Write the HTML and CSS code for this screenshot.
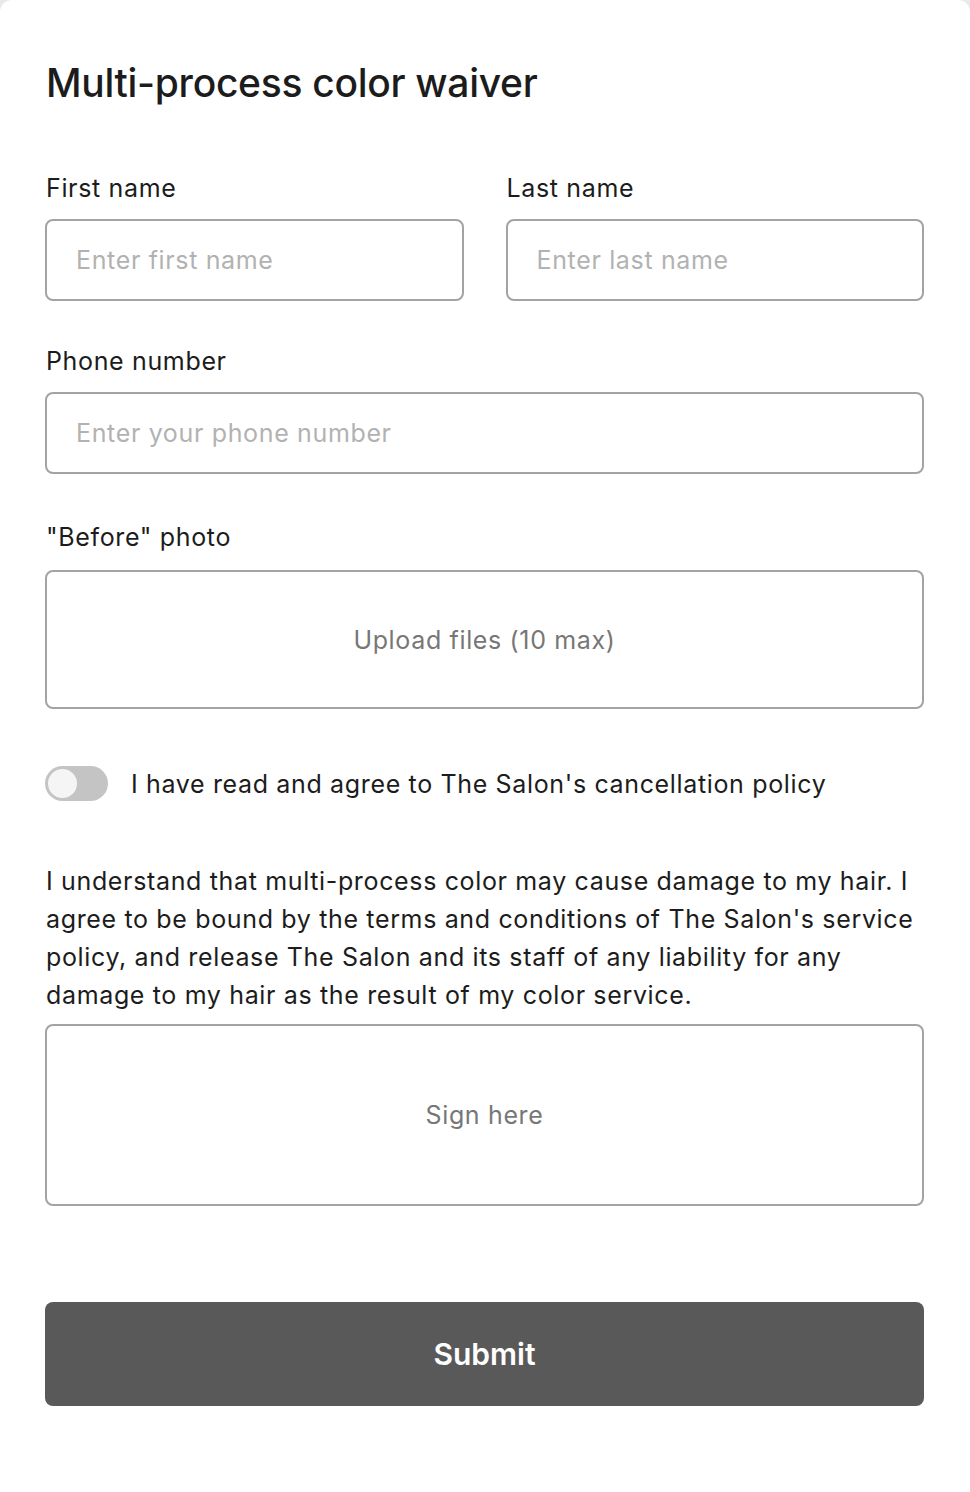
FILE: index.html
```html
<!DOCTYPE html>
<html lang="en">
<head>
<meta charset="utf-8">
<title>Multi-process color waiver</title>
<link rel="stylesheet" href="styles.css">
</head>
<body>
<main class="card">
  <h1 class="title">Multi-process color waiver</h1>
  <div class="row">
    <div class="field">
      <span class="label">First name</span>
      <span class="input"><span class="placeholder">Enter first name</span></span>
    </div>
    <div class="field">
      <span class="label">Last name</span>
      <span class="input"><span class="placeholder">Enter last name</span></span>
    </div>
  </div>
  <div class="field field-phone">
    <span class="label">Phone number</span>
    <span class="input"><span class="placeholder">Enter your phone number</span></span>
  </div>
  <div class="field field-photo">
    <span class="label">"Before" photo</span>
    <div class="upload">Upload files (10 max)</div>
  </div>
  <div class="agree">
    <span class="toggle"><span class="knob"></span></span>
    <span class="agree-text">I have read and agree to The Salon's cancellation policy</span>
  </div>
  <p class="terms">I understand that multi-process color may cause damage to my hair. I agree to be bound by the terms and conditions of The Salon's service policy, and release The Salon and its staff of any liability for any damage to my hair as the result of my color service.</p>
  <div class="sign">Sign here</div>
  <button class="submit" type="button">Submit</button>
</main>
</body>
</html>
```
FILE: styles.css
```css
html, body {
  margin: 0;
  padding: 0;
  background: #e9e9e9;
}
body {
  font-family: Inter, "Noto Sans", sans-serif;
  color: #1c1c1c;
}
.card {
  background: #fff;
  border-radius: 12px 12px 0 0;
  min-height: 1492px;
  box-sizing: border-box;
  padding: 57px 46px 0 45px;
  display: flex;
  flex-direction: column;
}
.title {
  margin: 0 0 0 1px;
  font-size: 39px;
  font-weight: 500;
  line-height: 52px;
  letter-spacing: -0.3px;
}
.row {
  display: grid;
  grid-template-columns: 1fr 1fr;
  gap: 42px;
  margin-top: 63px;
}
.field {
  display: flex;
  flex-direction: column;
}
.label {
  font-size: 25px;
  letter-spacing: 0.65px;
  line-height: 32px;
  height: 32px;
  margin-bottom: 15px;
  padding-left: 1px;
}
.field-phone { margin-top: 44px; }
.field-photo { margin-top: 47px; }
.field-photo .label { margin-bottom: 17px; }
.input {
  height: 82px;
  box-sizing: border-box;
  border: 2px solid #a3a3a3;
  border-radius: 8px;
  display: flex;
  align-items: center;
  padding: 0 29px;
}
.placeholder {
  font-size: 25px;
  letter-spacing: 0.65px;
  color: #b2b2b2;
}
.upload {
  height: 139px;
  box-sizing: border-box;
  border: 2px solid #a3a3a3;
  border-radius: 8px;
  display: flex;
  align-items: center;
  justify-content: center;
  font-size: 25px;
  letter-spacing: 0.65px;
  color: #777;
}
.agree {
  display: flex;
  align-items: center;
  gap: 23px;
  margin-top: 57px;
}
.toggle {
  width: 63px;
  height: 35px;
  border-radius: 18px;
  background: #c4c4c4;
  display: flex;
  align-items: center;
  padding: 0 3px;
  box-sizing: border-box;
  flex: none;
}
.knob {
  width: 29px;
  height: 29px;
  border-radius: 50%;
  background: #f5f5f5;
}
.agree-text {
  font-size: 25px;
  letter-spacing: 0.65px;
  line-height: 32px;
}
.terms {
  margin: 61px 0 0 1px;
  font-size: 25px;
  letter-spacing: 0.65px;
  line-height: 38px;
}
.sign {
  margin-top: 10px;
  height: 182px;
  box-sizing: border-box;
  border: 2px solid #a3a3a3;
  border-radius: 8px;
  display: flex;
  align-items: center;
  justify-content: center;
  font-size: 25px;
  letter-spacing: 0.65px;
  color: #777;
}
.submit {
  margin-top: 96px;
  height: 104px;
  border: none;
  border-radius: 8px;
  background: #595959;
  color: #fff;
  font-family: inherit;
  font-size: 30px;
  font-weight: 600;
}
```
